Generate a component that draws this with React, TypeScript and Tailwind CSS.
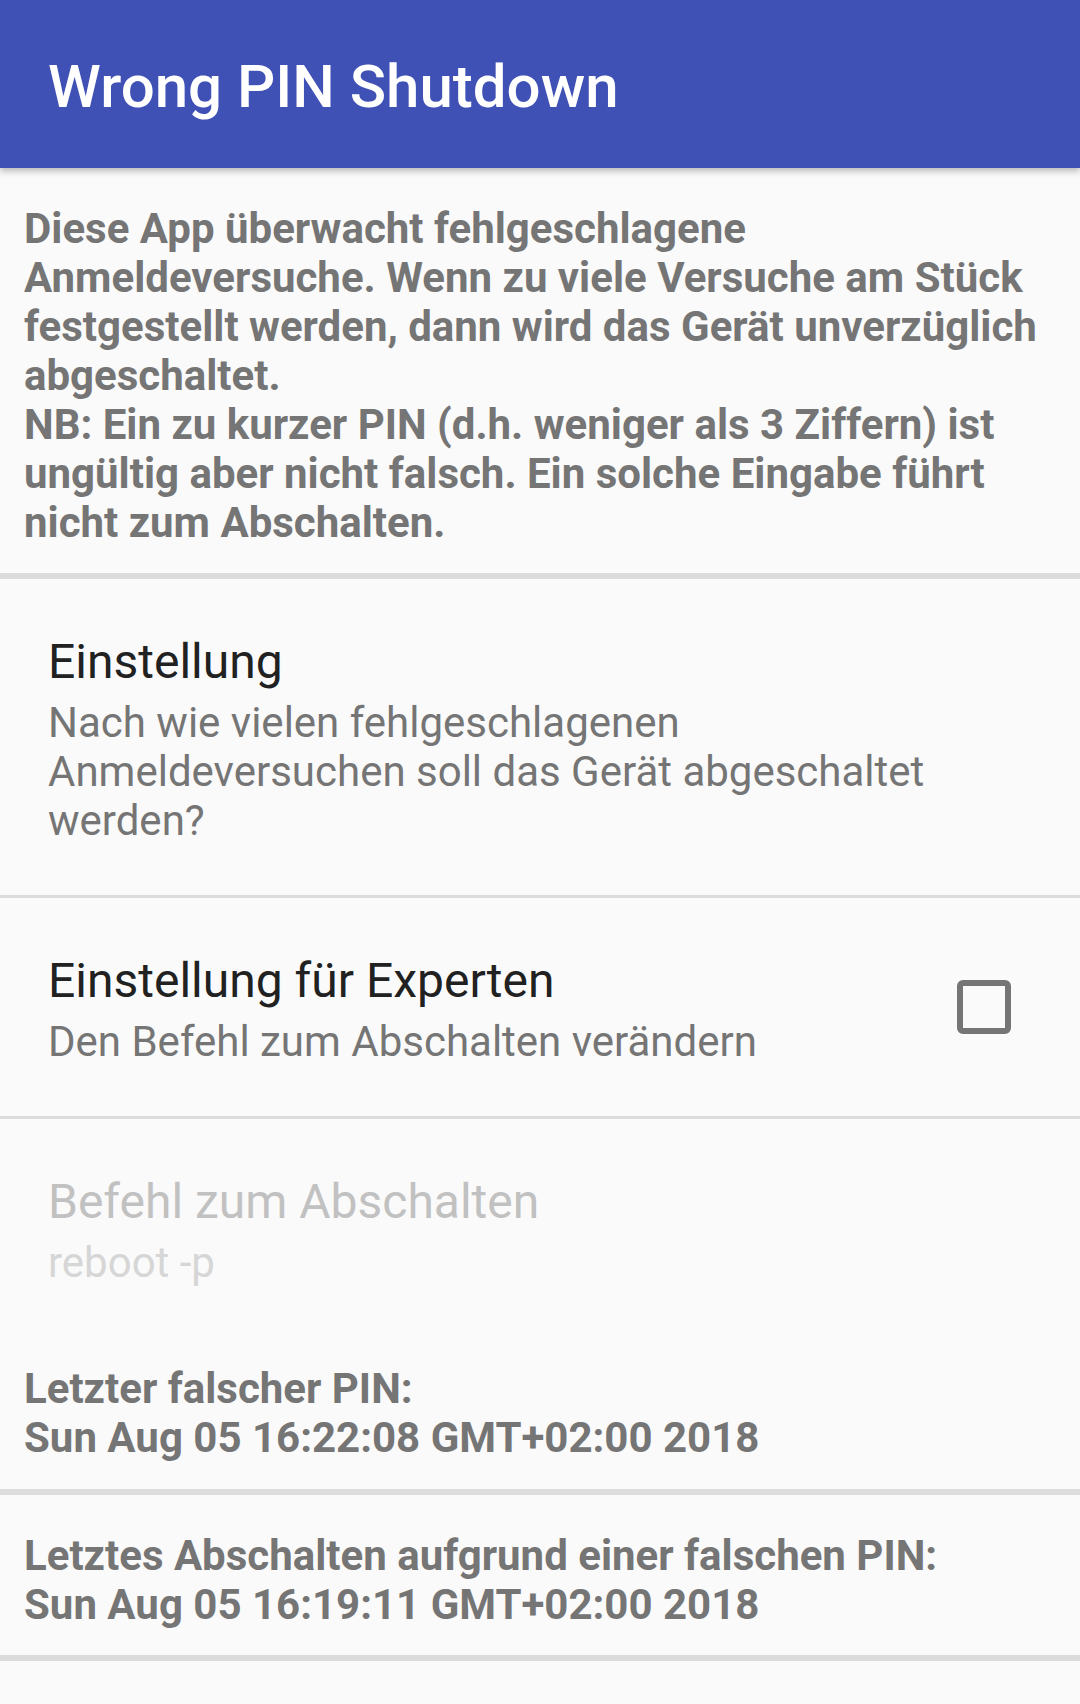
import React from 'react';

interface PrefItemProps {
  title: string;
  summary: string;
  disabled?: boolean;
  checkbox?: boolean;
  last?: boolean;
}

const PrefItem: React.FC<PrefItemProps> = ({ title, summary, disabled, checkbox, last }) => {
  return (
    <div
      className={`flex items-center pl-[48px] pt-[55px] ${last ? 'pb-[41px]' : 'pb-[50px]'} ${
        checkbox ? 'pr-[69px]' : 'pr-[48px]'
      }`}
    >
      <div className="min-w-0 flex-1">
        <div
          className={`text-[48px] leading-[56px] ${disabled ? 'text-[#c1c1c1]' : 'text-[#212121]'}`}
        >
          {title}
        </div>
        <div
          className={`mt-[8px] text-[42px] leading-[49px] ${
            disabled ? 'text-[#d6d6d6]' : 'text-[#757575]'
          }`}
        >
          {summary}
        </div>
      </div>
      {checkbox && (
        <div className="mb-[6px] ml-[24px] h-[54px] w-[54px] shrink-0 rounded-[6px] border-[6px] border-[#757575]" />
      )}
    </div>
  );
};

const InfoBlock: React.FC<{ label: string; value: string; bottom: string }> = ({
  label,
  value,
  bottom,
}) => (
  <div className={`px-[24px] pt-[36px] ${bottom} text-[42px] font-bold leading-[49px] text-[#757575]`}>
    <div>{label}</div>
    <div>{value}</div>
  </div>
);

const ThickDivider = () => <div className="h-[6px] bg-[#dcdcdc]" />;
const ThinDivider = () => <div className="h-[3px] bg-[#dcdcdc]" />;

export default function App() {
  return (
    <div className="min-h-screen w-[1080px] bg-[#fafafa] font-['Roboto',sans-serif]">
      {/* Toolbar */}
      <header className="relative z-10 h-[168px] bg-[#3f51b5] pl-[48px] shadow-[0_3px_7px_rgba(0,0,0,0.28)]">
        <h1 className="pt-[52px] text-[60px] font-medium leading-[70px] text-white">
          Wrong PIN Shutdown
        </h1>
      </header>

      {/* Description */}
      <section className="px-[24px] pt-[36px] pb-[26px] text-[42px] font-bold leading-[49px] text-[#757575]">
        <p>
          Diese App überwacht fehlgeschlagene Anmeldeversuche. Wenn zu viele Versuche am Stück
          festgestellt werden, dann wird das Gerät unverzüglich abgeschaltet.
        </p>
        <p>
          NB: Ein zu kurzer PIN (d.h. weniger als 3 Ziffern) ist ungültig aber nicht falsch. Ein
          solche Eingabe führt nicht zum Abschalten.
        </p>
      </section>
      <ThickDivider />

      {/* Preferences */}
      <PrefItem
        title="Einstellung"
        summary="Nach wie vielen fehlgeschlagenen Anmeldeversuchen soll das Gerät abgeschaltet werden?"
      />
      <ThinDivider />
      <PrefItem
        title="Einstellung für Experten"
        summary="Den Befehl zum Abschalten verändern"
        checkbox
      />
      <ThinDivider />
      <PrefItem title="Befehl zum Abschalten" summary="reboot -p" disabled last />

      {/* Status */}
      <InfoBlock
        label="Letzter falscher PIN:"
        value="Sun Aug 05 16:22:08 GMT+02:00 2018"
        bottom="pb-[27px]"
      />
      <ThickDivider />
      <InfoBlock
        label="Letztes Abschalten aufgrund einer falschen PIN:"
        value="Sun Aug 05 16:19:11 GMT+02:00 2018"
        bottom="pb-[26px]"
      />
      <ThickDivider />
    </div>
  );
}
